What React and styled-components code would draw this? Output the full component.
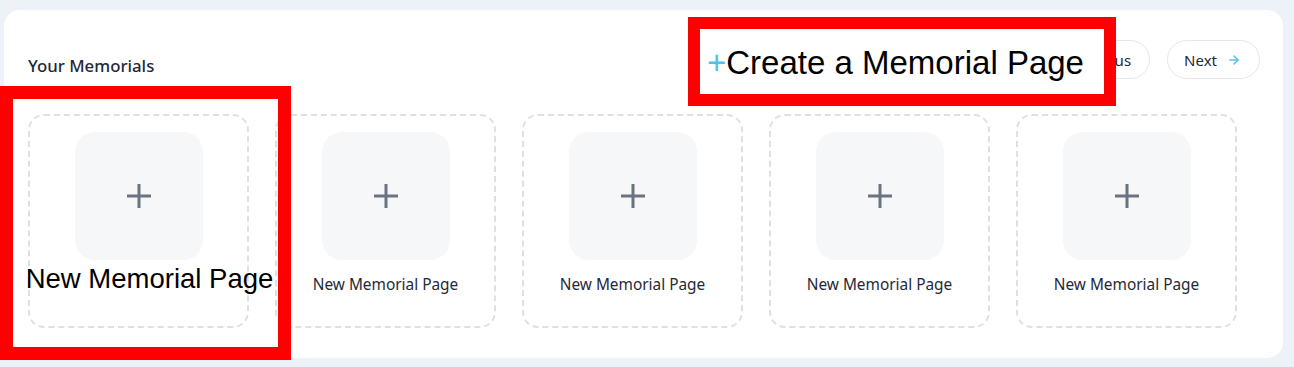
import React from "react";
import styled, { createGlobalStyle } from "styled-components";
import { ArrowLeft, ArrowRight } from "lucide-react";

const GlobalStyle = createGlobalStyle`
  html, body {
    margin: 0;
    padding: 0;
    background: #edf1f8;
  }
  body {
    font-family: "Noto Sans", "Open Sans", sans-serif;
  }
`;

const cards = [1, 2, 3, 4, 5];

const PlusIcon = () => (
  <svg width="26" height="26" viewBox="0 0 26 26">
    <line x1="13" y1="1" x2="13" y2="25" stroke="#6b7380" strokeWidth="3" />
    <line x1="1" y1="13" x2="25" y2="13" stroke="#6b7380" strokeWidth="3" />
  </svg>
);

const App = () => {
  return (
    <>
      <GlobalStyle />
      <Page>
        <Panel>
          <Header>
            <Title>Your Memorials</Title>
            <Pager>
              <PageButton>
                <ArrowLeft size={14} strokeWidth={2.5} color="#4fc3e6" />
                Previous
              </PageButton>
              <PageButton>
                Next
                <ArrowRight size={14} strokeWidth={2.5} color="#4fc3e6" />
              </PageButton>
            </Pager>
          </Header>
          <CardRow>
            {cards.map((n) => (
              <Card key={n}>
                <IconBox>
                  <PlusIcon />
                </IconBox>
                <Label $big={n === 1}>New Memorial Page</Label>
              </Card>
            ))}
          </CardRow>
        </Panel>

        <CreateHighlight>
          <CreatePlus>+</CreatePlus>Create a Memorial Page
        </CreateHighlight>
        <CardHighlight />
      </Page>
    </>
  );
};

const Page = styled.div`
  position: relative;
  padding: 10px 11px 9px 4px;
`;

const Panel = styled.div`
  background: #ffffff;
  border-radius: 16px;
  padding: 30px 23px 30px 24px;
`;

const Header = styled.div`
  display: flex;
  align-items: center;
  justify-content: space-between;
  height: 39px;
`;

const Title = styled.h2`
  margin: 11px 0 0 0;
  font-size: 16.8px;
  font-weight: 500;
  color: #1f2937;
`;

const Pager = styled.div`
  display: flex;
  gap: 17px;
`;

const PageButton = styled.button`
  display: flex;
  align-items: center;
  gap: 10px;
  height: 39px;
  padding: 0 18px 0 16px;
  border: 1px solid #e3e7ed;
  border-radius: 20px;
  background: #ffffff;
  font-family: "Noto Sans", sans-serif;
  font-size: 15px;
  color: #1f2937;
`;

const CardRow = styled.div`
  display: flex;
  gap: 26px;
  margin-top: 35px;
`;

const Card = styled.div`
  box-sizing: border-box;
  width: 221px;
  height: 214px;
  border: 2px dashed #dde1e7;
  border-radius: 16px;
  padding-top: 16px;
  display: flex;
  flex-direction: column;
  align-items: center;
`;

const IconBox = styled.div`
  width: 128px;
  height: 128px;
  border-radius: 20px;
  background: #f6f7f9;
  display: flex;
  align-items: center;
  justify-content: center;
`;

const Label = styled.div`
  white-space: nowrap;
  margin-top: ${(p) => (p.$big ? "3px" : "14px")};
  margin-left: ${(p) => (p.$big ? "22px" : "0")};
  font-family: ${(p) =>
    p.$big ? `"Liberation Sans", Arial, sans-serif` : `"Noto Sans", sans-serif`};
  font-size: ${(p) => (p.$big ? "27.5px" : "15.4px")};
  color: ${(p) => (p.$big ? "#000000" : "#1f2937")};
`;

const CreateHighlight = styled.div`
  position: absolute;
  left: 688px;
  top: 17px;
  box-sizing: border-box;
  width: 428px;
  height: 89px;
  border: 12px solid #ff0000;
  background: #ffffff;
  padding: 3px 0 0 7px;
  display: flex;
  align-items: center;
  font-family: "Liberation Sans", Arial, sans-serif;
  font-size: 33px;
  color: #000000;
  white-space: nowrap;
`;

const CreatePlus = styled.span`
  color: #4fc3e6;
  font-weight: 300;
`;

const CardHighlight = styled.div`
  position: absolute;
  left: 0;
  top: 86px;
  box-sizing: border-box;
  width: 291px;
  height: 274px;
  border: 13px solid #ff0000;
  pointer-events: none;
`;

export default App;
